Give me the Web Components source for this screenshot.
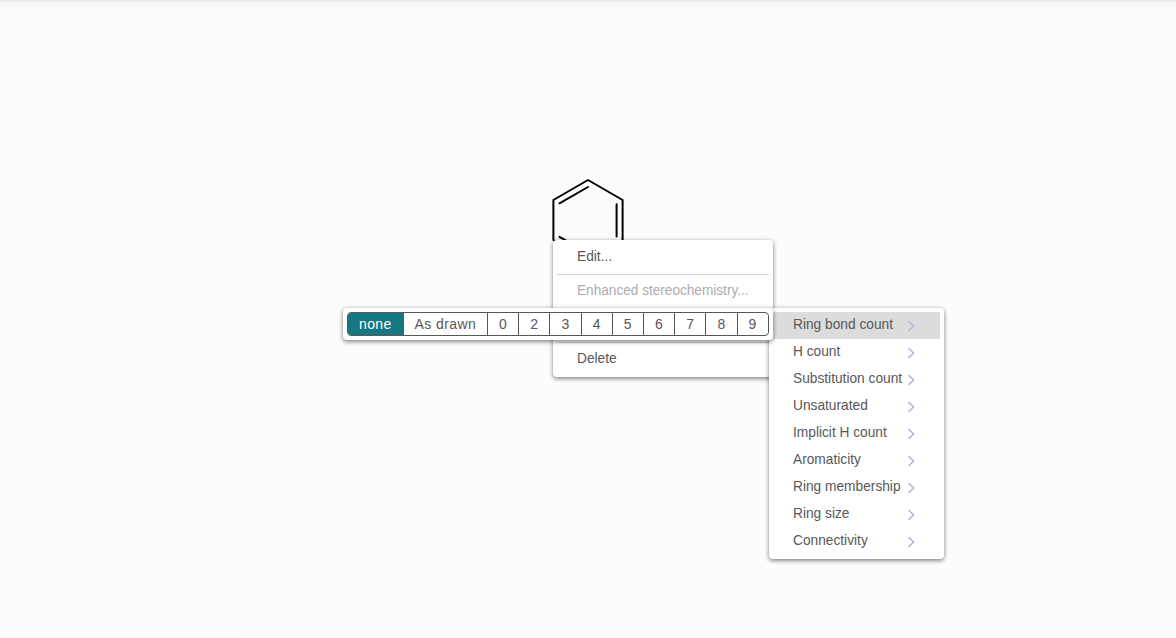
<!DOCTYPE html>
<html lang="en"><head><meta charset="utf-8"><title>Structure editor</title>
<style>
html,body{height:100%}
body{margin:0;background:#fcfcfc;overflow:hidden;color:#585858;font-family:"Liberation Sans",Arial,sans-serif}
</style></head><body>
<editor-canvas>
  <benzene-ring></benzene-ring>
  <context-menu style="left:553px;top:240px;width:220px;height:137px">
    <menu-item>Edit...</menu-item>
    <menu-line></menu-line>
    <menu-item disabled style="--sx:.908">Enhanced stereochemistry...</menu-item>
    <menu-line></menu-line>
    <menu-item disabled></menu-item>
    <menu-line></menu-line>
    <menu-item>Delete</menu-item>
  </context-menu>
  <context-menu style="left:769px;top:308px;width:175px;height:251px">
    <menu-item sub active>Ring bond count</menu-item>
    <menu-item sub>H count</menu-item>
    <menu-item sub>Substitution count</menu-item>
    <menu-item sub>Unsaturated</menu-item>
    <menu-item sub>Implicit H count</menu-item>
    <menu-item sub>Aromaticity</menu-item>
    <menu-item sub>Ring membership</menu-item>
    <menu-item sub>Ring size</menu-item>
    <menu-item sub>Connectivity</menu-item>
  </context-menu>
  <context-menu style="left:343px;top:308px;width:430px;height:32px">
    <toggle-group><toggle-option selected>none</toggle-option><toggle-option>As drawn</toggle-option><toggle-option>0</toggle-option><toggle-option>2</toggle-option><toggle-option>3</toggle-option><toggle-option>4</toggle-option><toggle-option>5</toggle-option><toggle-option>6</toggle-option><toggle-option>7</toggle-option><toggle-option>8</toggle-option><toggle-option>9</toggle-option></toggle-group>
  </context-menu>
</editor-canvas>
<script>
const define=(name,html)=>customElements.define(name,class extends HTMLElement{
  constructor(){super();this.attachShadow({mode:'open'}).innerHTML=html}
});
define('editor-canvas',`<style>
:host{display:block;position:relative;height:638px;overflow:hidden;background:linear-gradient(90deg,#f8f8f8 200px,#fcfcfc 280px) bottom/100% 1px no-repeat,linear-gradient(#e8e8ec,#f3f3f5 2px,#f9f9fa 5px,#fcfcfc 9px)}
</style><slot></slot>`);
define('benzene-ring',`<style>:host{position:absolute;left:548px;top:175px}svg{display:block}</style>
<svg width="80" height="90" fill="none" stroke="#000" stroke-width="2" stroke-linecap="round" stroke-linejoin="round"><path d="M40 5 74.6 25V65L40 85 5.4 65V25ZM40 12 11.5 28.3M68.6 29.2V61.5M11.5 61.9 40 78"/></svg>`);
define('context-menu',`<style>
:host{position:absolute;display:block;box-sizing:border-box;padding:4px;background:#fff;border-radius:4px;box-shadow:0 2px 4px rgba(0,0,0,.4),0 0 5px rgba(0,0,0,.16)}
</style><slot></slot>`);
define('menu-line',`<style>:host{display:block;height:1px;margin:3px 0;background:#c5d2e2}</style>`);
define('menu-item',`<style>
:host{display:flex;box-sizing:border-box;height:27px;padding:0 24px 0 20px;align-items:center;font-size:15px;white-space:nowrap;line-height:18px}
:host([disabled]){color:#acacac}
:host([active]){background:#dcdcdc}
span{flex:1;min-width:0;margin-bottom:3px;transform:scaleX(var(--sx,.915));transform-origin:0 0}
svg{display:none;flex:none;margin-top:1px}
:host([sub]) svg{display:block}
</style><span><slot></slot></span><svg width="9" height="12" fill="none" stroke="#b6b9dc" stroke-width="1.6"><path d="m1.5 1.2 5.1 4.8-5.1 4.8"/></svg>`);
define('toggle-group',`<style>
:host{display:flex;box-sizing:border-box;height:24px;border:1px solid #585858;border-radius:4px;overflow:hidden}
</style><slot></slot>`);
define('toggle-option',`<style>
:host{display:flex;padding:0 11px;border-right:1px solid #585858;font-size:14px;letter-spacing:.4px;line-height:22px;white-space:nowrap}
:host(:first-child){padding-right:10.8px}
:host(:last-child){border:0}
:host([selected]){background:#167782;color:#fff}
</style><slot></slot>`);
</script></body></html>
